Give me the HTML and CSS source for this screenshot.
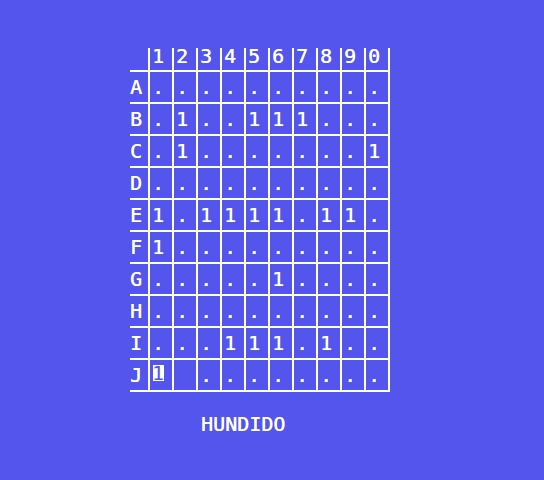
FILE: index.html
```html
<!DOCTYPE html>
<html>
<head>
<meta charset="utf-8">
<link rel="stylesheet" href="styles.css">
</head>
<body>
<div class="screen">
  <div class="board">
    <div class="row head"><span class="lbl"></span><span class="c">1</span><span class="c">2</span><span class="c">3</span><span class="c">4</span><span class="c">5</span><span class="c">6</span><span class="c">7</span><span class="c">8</span><span class="c">9</span><span class="c last">0</span></div>
    <div class="hr"></div>
    <div class="row"><span class="lbl">A</span><span class="c">.</span><span class="c">.</span><span class="c">.</span><span class="c">.</span><span class="c">.</span><span class="c">.</span><span class="c">.</span><span class="c">.</span><span class="c">.</span><span class="c last">.</span></div>
    <div class="hr"></div>
    <div class="row"><span class="lbl">B</span><span class="c">.</span><span class="c">1</span><span class="c">.</span><span class="c">.</span><span class="c">1</span><span class="c">1</span><span class="c">1</span><span class="c">.</span><span class="c">.</span><span class="c last">.</span></div>
    <div class="hr"></div>
    <div class="row"><span class="lbl">C</span><span class="c">.</span><span class="c">1</span><span class="c">.</span><span class="c">.</span><span class="c">.</span><span class="c">.</span><span class="c">.</span><span class="c">.</span><span class="c">.</span><span class="c last">1</span></div>
    <div class="hr"></div>
    <div class="row"><span class="lbl">D</span><span class="c">.</span><span class="c">.</span><span class="c">.</span><span class="c">.</span><span class="c">.</span><span class="c">.</span><span class="c">.</span><span class="c">.</span><span class="c">.</span><span class="c last">.</span></div>
    <div class="hr"></div>
    <div class="row"><span class="lbl">E</span><span class="c">1</span><span class="c">.</span><span class="c">1</span><span class="c">1</span><span class="c">1</span><span class="c">1</span><span class="c">.</span><span class="c">1</span><span class="c">1</span><span class="c last">.</span></div>
    <div class="hr"></div>
    <div class="row"><span class="lbl">F</span><span class="c">1</span><span class="c">.</span><span class="c">.</span><span class="c">.</span><span class="c">.</span><span class="c">.</span><span class="c">.</span><span class="c">.</span><span class="c">.</span><span class="c last">.</span></div>
    <div class="hr"></div>
    <div class="row"><span class="lbl">G</span><span class="c">.</span><span class="c">.</span><span class="c">.</span><span class="c">.</span><span class="c">.</span><span class="c">1</span><span class="c">.</span><span class="c">.</span><span class="c">.</span><span class="c last">.</span></div>
    <div class="hr"></div>
    <div class="row"><span class="lbl">H</span><span class="c">.</span><span class="c">.</span><span class="c">.</span><span class="c">.</span><span class="c">.</span><span class="c">.</span><span class="c">.</span><span class="c">.</span><span class="c">.</span><span class="c last">.</span></div>
    <div class="hr"></div>
    <div class="row"><span class="lbl">I</span><span class="c">.</span><span class="c">.</span><span class="c">.</span><span class="c">1</span><span class="c">1</span><span class="c">1</span><span class="c">.</span><span class="c">1</span><span class="c">.</span><span class="c last">.</span></div>
    <div class="hr"></div>
    <div class="row"><span class="lbl">J</span><span class="c"><span class="cursor">1</span></span><span class="c"></span><span class="c">.</span><span class="c">.</span><span class="c">.</span><span class="c">.</span><span class="c">.</span><span class="c">.</span><span class="c">.</span><span class="c last">.</span></div>
    <div class="hr"></div>
  </div>
  <div class="status">HUNDIDO</div>
</div>
</body>
</html>
```

FILE: styles.css
```css
html, body {
  margin: 0;
  padding: 0;
}
body {
  background: #5455ed;
  color: #ffffff;
  font-family: "DejaVu Sans Mono", "Liberation Mono", monospace;
  font-size: 20px;
  line-height: 16px;
  width: 544px;
  height: 480px;
  overflow: hidden;
}
.screen {
  padding-top: 48px;
}
.board {
  margin-left: 130px;
  width: 260px;
  text-shadow: 0.3px 0 0 #ffffff;
}
.row {
  display: flex;
  height: 30px;
}
.row.head {
  height: 22px;
}
.lbl {
  width: 18px;
  padding-top: 7px;
  box-sizing: border-box;
}
.c {
  width: 24px;
  box-sizing: border-box;
  border-left: 2px solid #ffffff;
  padding-left: 2px;
  padding-top: 7px;
  white-space: pre;
}
.c.last {
  width: 26px;
  border-right: 2px solid #ffffff;
}
.head .c,
.head .lbl {
  padding-top: 0;
}
.hr {
  height: 2px;
  background: #ffffff;
}
.cursor {
  display: inline-block;
  width: 11px;
  height: 16px;
  margin-top: -2px;
  margin-left: 1px;
  vertical-align: top;
  background: #ffffff;
  color: #5455ed;
  text-shadow: none;
  text-indent: -1px;
}
.status {
  margin-top: 24px;
  padding-left: 201px;
  text-shadow: 0.3px 0 0 #ffffff;
}
```
